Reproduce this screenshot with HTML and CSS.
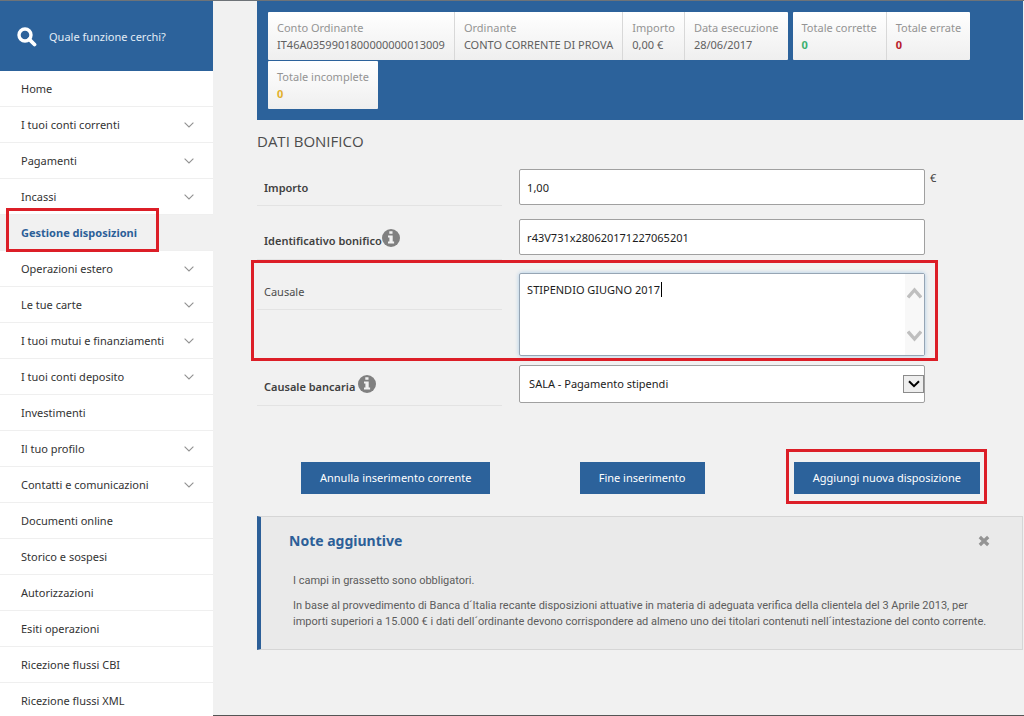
FILE: index.html
```html
<!DOCTYPE html>
<html lang="it">
<head>
<meta charset="utf-8">
<title>Dati bonifico</title>
<link rel="stylesheet" href="styles.css">
</head>
<body>
<svg class="sprite" aria-hidden="true">
  <symbol id="chevron" viewBox="0 0 10 6"><path d="M.6.6 5 5 9.4.6" fill="none" stroke="currentColor" stroke-width="1.1"/></symbol>
  <symbol id="info" viewBox="0 0 18 18"><circle cx="9" cy="9" r="9" fill="#808080"/><path d="M7.3 2.2h3.2v2.6H7.3zM6 6.4h4.7v6h1.4v2.2H6v-2.2h1.4V8.6H6z" fill="#f1f1f1"/></symbol>
</svg>
<div class="page">
  <aside class="sidebar">
    <label class="search">
      <svg class="search-icon" viewBox="0 0 20 20"><circle cx="8" cy="8" r="6" fill="none" stroke="#fff" stroke-width="3.4"/><path d="m12.3 12.3 5.2 5.2" stroke="#fff" stroke-width="3.8" stroke-linecap="round"/></svg>
      <input class="search-input" type="text" placeholder="Quale funzione cerchi?" aria-label="Cerca funzione">
    </label>
    <nav class="menu">
      <a class="item" href="#">Home</a>
      <a class="item" href="#">I tuoi conti correnti<svg class="chevron"><use href="#chevron"/></svg></a>
      <a class="item" href="#">Pagamenti<svg class="chevron"><use href="#chevron"/></svg></a>
      <a class="item" href="#">Incassi<svg class="chevron"><use href="#chevron"/></svg></a>
      <a class="item current" href="#">Gestione disposizioni<span class="mark mark-menu"></span></a>
      <a class="item" href="#">Operazioni estero<svg class="chevron"><use href="#chevron"/></svg></a>
      <a class="item" href="#">Le tue carte<svg class="chevron"><use href="#chevron"/></svg></a>
      <a class="item" href="#">I tuoi mutui e finanziamenti<svg class="chevron"><use href="#chevron"/></svg></a>
      <a class="item" href="#">I tuoi conti deposito<svg class="chevron"><use href="#chevron"/></svg></a>
      <a class="item" href="#">Investimenti</a>
      <a class="item" href="#">Il tuo profilo<svg class="chevron"><use href="#chevron"/></svg></a>
      <a class="item" href="#">Contatti e comunicazioni<svg class="chevron"><use href="#chevron"/></svg></a>
      <a class="item" href="#">Documenti online</a>
      <a class="item" href="#">Storico e sospesi</a>
      <a class="item" href="#">Autorizzazioni</a>
      <a class="item" href="#">Esiti operazioni</a>
      <a class="item" href="#">Ricezione flussi CBI</a>
      <a class="item" href="#">Ricezione flussi XML</a>
    </nav>
  </aside>
  <main class="main">
    <section class="summary">
      <dl class="group">
        <div class="tile"><dt>Conto Ordinante</dt><dd>IT46A0359901800000000013009</dd></div>
        <div class="tile"><dt>Ordinante</dt><dd>CONTO CORRENTE DI PROVA</dd></div>
        <div class="tile"><dt>Importo</dt><dd>0,00 €</dd></div>
        <div class="tile"><dt>Data esecuzione</dt><dd>28/06/2017</dd></div>
      </dl>
      <dl class="group">
        <div class="tile"><dt>Totale corrette</dt><dd class="ok">0</dd></div>
        <div class="tile"><dt>Totale errate</dt><dd class="bad">0</dd></div>
      </dl>
      <dl class="group">
        <div class="tile"><dt>Totale incomplete</dt><dd class="warn">0</dd></div>
      </dl>
    </section>
    <h1 class="title">DATI BONIFICO</h1>
    <form class="form">
      <div class="row">
        <label class="label required" for="importo">Importo</label>
        <input class="field" id="importo" type="text" value="1,00">
        <span class="unit">€</span>
      </div>
      <div class="row">
        <label class="label required tall" for="ident">Identificativo bonifico<svg class="info"><use href="#info"/></svg></label>
        <input class="field" id="ident" type="text" value="r43V731x280620171227065201">
      </div>
      <div class="row">
        <label class="label" for="causale">Causale</label>
        <div class="area-wrap">
          <textarea class="field area" id="causale">STIPENDIO GIUGNO 2017</textarea>
          <span class="caret"></span>
          <span class="scroll">
            <svg class="arrow" viewBox="0 0 15 12"><path d="M1 10.5 7.5 3 14 10.5" fill="none" stroke="#bfbfbf" stroke-width="3.4"/></svg>
            <svg class="arrow" viewBox="0 0 15 12"><path d="M1 1.5 7.5 9 14 1.5" fill="none" stroke="#bfbfbf" stroke-width="3.4"/></svg>
          </span>
        </div>
        <span class="mark mark-row"></span>
      </div>
      <div class="row close">
        <label class="label required tall spaced" for="banca">Causale bancaria<svg class="info"><use href="#info"/></svg></label>
        <div class="select-wrap">
          <select class="field select" id="banca"><option>SALA - Pagamento stipendi</option></select>
          <span class="drop"><svg viewBox="0 0 12 8"><path d="M1 1.2 6 6.2 11 1.2" fill="none" stroke="#000" stroke-width="2"/></svg></span>
        </div>
      </div>
      <div class="actions">
        <button class="button" type="button">Annulla inserimento corrente</button>
        <button class="button" type="button">Fine inserimento</button>
        <button class="button" type="button">Aggiungi nuova disposizione<span class="mark mark-button"></span></button>
      </div>
    </form>
    <section class="notes">
      <header class="notes-head">
        <h2 class="notes-title">Note aggiuntive</h2>
        <button class="dismiss" type="button" aria-label="Chiudi"><svg viewBox="0 0 12 12"><path d="m1.8 2 8.4 8M10.200 2l-8.400 8" stroke="#949494" stroke-width="3.300"/></svg></button>
      </header>
      <p>I campi in grassetto sono obbligatori.</p>
      <p>In base al provvedimento di Banca d´Italia recante disposizioni attuative in materia di adeguata verifica della clientela del 3 Aprile 2013, per importi superiori a 15.000 € i dati dell´ordinante devono corrispondere ad almeno uno dei titolari contenuti nell´intestazione del conto corrente.</p>
    </section>
  </main>
</div>
</body>
</html>
```
FILE: styles.css
```css
* { box-sizing: border-box; }
body {
  margin: 0;
  background: #f1f1f1;
  color: #3c3c3c;
  font: 11px/18px "Noto Sans", "Open Sans", sans-serif;
}
h1, h2, p, dl, dd { margin: 0; }
input, textarea, select, button { font: inherit; color: inherit; }
.sprite { position: absolute; width: 0; height: 0; }

.page {
  display: flex;
  min-height: 100vh;
  border-top: 1px solid #6e7378;
}
.sidebar { flex: 0 0 213px; height: calc(100vh - 1px); overflow: hidden; background: #fff; }
.search {
  display: flex;
  align-items: center;
  gap: 12px;
  height: 70px;
  padding: 2px 17px 0;
  background: #2c629b;
}
.search-icon { flex: none; width: 20px; height: 20px; }
.search-input { flex: 1; min-width: 0; padding: 0; border: 0; outline: 0; background: none; color: #fff; }
.search-input::placeholder { color: #e3edf6; opacity: 1; }
.item {
  position: relative;
  display: flex;
  align-items: center;
  justify-content: space-between;
  height: 36px;
  padding: 0 19px 0 21px;
  border-bottom: 1px solid #efefef;
  color: #333;
  text-decoration: none;
}
.current { background: #f1f1f1; color: #2c5f98; font-weight: 700; }
.chevron { width: 10px; height: 6px; color: #929292; }

.mark { position: absolute; border: 3px solid #dc1e27; pointer-events: none; }
.mark-menu { inset: -7px 54px -2px 6px; }
.mark-row { inset: -13px 85px -5px -6px; }
.mark-button { inset: -13px -7px -10px -8px; }

.main {
  flex: 1;
  min-width: 0;
  padding: 0 1px 0 44px;
  border-bottom: 1px solid #555;
}
.summary {
  display: flex;
  flex-wrap: wrap;
  gap: 1px 5px;
  padding: 11px;
  background: #2c629b;
}
.group { display: flex; border-radius: 1px; background: linear-gradient(#fff, #efefef); }
.tile { padding: 7px 9px; border-right: 1px solid #d8d8d8; line-height: 17px; color: #606060; }
.tile:last-child { border-right: 0; }
.tile dt { color: #949494; }
.ok, .bad, .warn { font-weight: 700; }
.tile .ok { color: #3cb070; }
.tile .bad { color: #b8202a; }
.tile .warn { color: #e2b02c; }

.title { margin: 9px 0 16px; font: 400 15px/24px "Open Sans", sans-serif; color: #4c4c4c; }
.row {
  position: relative;
  display: grid;
  grid-template-columns: 32% 53% 1fr;
  column-gap: 17px;
  align-items: start;
  margin-bottom: 13px;
}
.row:has(+ .close) { margin-bottom: 9px; }
.label {
  display: flex;
  align-items: center;
  height: 37px;
  padding: 1px 0 0 7px;
  border-bottom: 1px solid #e3e3e3;
  color: #4c4c4c;
}
.required { font-weight: 600; color: #404040; }
.tall { align-items: flex-end; height: 41px; padding-bottom: 9px; }
.spaced { gap: 3px; }
.info { width: 18px; height: 18px; margin-bottom: 3px; }
.field {
  display: block;
  width: 100%;
  height: 36px;
  padding: 0 7px;
  border: 1px solid #a0a0a0;
  border-radius: 2px;
  outline: 0;
  background: #fff;
  color: #1c1c1c;
}
.unit { margin-left: -12px; }
.area-wrap, .select-wrap { position: relative; }
.area {
  height: 83px;
  padding: 7px;
  border-color: #96a5b4;
  box-shadow: 0 0 4px #a9cbe6;
  resize: none;
  overflow: hidden;
}
.caret { position: absolute; top: 9px; left: 142px; width: 1px; height: 15px; background: #000; }
.scroll {
  position: absolute;
  inset: 1px 1px 1px auto;
  display: flex;
  flex-direction: column;
  justify-content: space-between;
  width: 19px;
  padding: 13px 2px;
  background: #f8f8f8;
}
.arrow { width: 15px; height: 12px; }
.select { height: 38px; padding: 0 9px; appearance: none; }
.drop {
  position: absolute;
  top: 10px;
  right: 1px;
  display: grid;
  place-items: center;
  width: 21px;
  height: 18px;
  border: 1px solid #8b8b8b;
  background: #eee;
  pointer-events: none;
}
.drop svg { width: 12px; height: 8px; }

.actions {
  display: flex;
  justify-content: space-between;
  margin: 56px 0 22px;
  padding: 0 43px 0 44px;
}
.button {
  position: relative;
  height: 32px;
  padding: 0 19px;
  border: 0;
  background: #2c629b;
  color: #fff;
}
.notes {
  padding: 11px 32px 10px;
  border: 1px solid #d6d6d6;
  border-left: 4px solid #2c5f98;
  background: #eaeaea;
  color: #5c5c5c;
  font-family: Roboto, sans-serif;
  line-height: 16px;
}
.notes p { margin-bottom: 9px; }
.notes-head {
  display: flex;
  align-items: center;
  justify-content: space-between;
  margin: 0 0 20px -4px;
}
.notes-title { font: 700 14px/25px "Noto Sans", sans-serif; color: #2c5f98; }
.dismiss { display: grid; width: 12px; height: 12px; padding: 0; border: 0; background: none; }
```
